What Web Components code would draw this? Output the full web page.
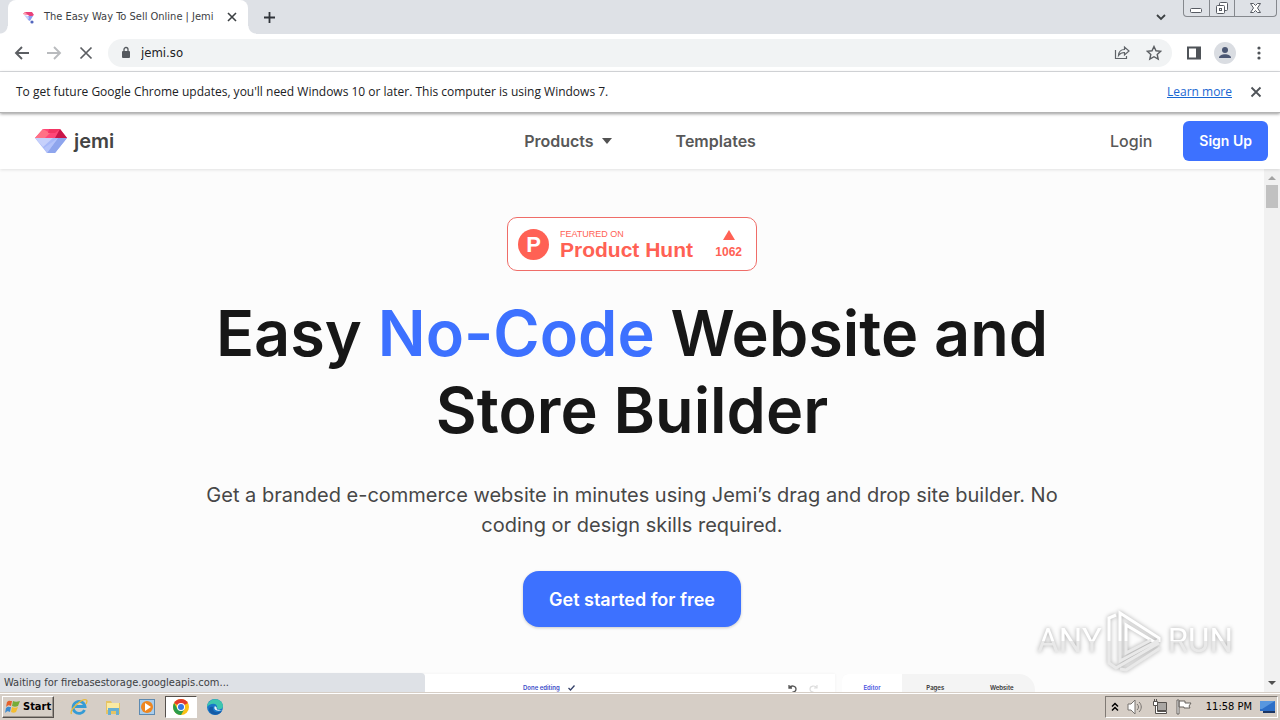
<!DOCTYPE html>
<html lang="en">
<head>
<meta charset="utf-8">
<title>The Easy Way To Sell Online | Jemi</title>
<style>
  html, body { height: 100%; margin: 0; }
  body {
    overflow: hidden;
    --ui: "DejaVu Sans Condensed", "DejaVu Sans", sans-serif;
    --brand: "Inter", "Liberation Sans", sans-serif;
    --blue: #3d71ff;
    font-family: var(--brand);
  }
</style>
</head>
<body>
<desktop-screen></desktop-screen>

<script>
const define = (name, html) => {
  const template = document.createElement('template');
  template.innerHTML = `<style>*{box-sizing:border-box}button,input{font:inherit;color:inherit;background:none;border:0;padding:0;margin:0}a{color:inherit;text-decoration:none}svg{display:block;flex:none}</style>` + html;
  customElements.define(name, class extends HTMLElement {
    constructor() {
      super();
      this.attachShadow({ mode: 'open' }).append(template.content.cloneNode(true));
    }
  });
};

/* ---------- Browser chrome ---------- */

define('tab-strip', `
<style>
  :host { display: flex; height: 34px; flex: none; background: #dee1e6; color: #3c4043; font: 11px/34px var(--ui); padding-left: 8px; }
  .tab { position: relative; display: flex; align-items: center; width: 240px; padding: 0 10px 0 14px; background: #fff; border-radius: 8px 8px 0 0; gap: 8px; }
  .tab::before, .tab::after { content: ""; position: absolute; bottom: 0; width: 8px; height: 8px; }
  .tab::before { left: -8px; background: radial-gradient(circle at 0 0, transparent 7px, #fff 8px); }
  .tab::after { right: -8px; background: radial-gradient(circle at 100% 0, transparent 7px, #fff 8px); }
  .title { flex: 1; white-space: nowrap; }
  .new { padding: 0 15px; }
  .fill { flex: 1; }
  .search { padding-right: 16px; }
  .window { display: flex; align-self: flex-start; height: 17px; margin-right: 3px; border: 1px solid #85888d; border-top: 0; border-radius: 0 0 4px 4px; }
  .window button { display: flex; justify-content: center; align-items: center; width: 25px; }
  .window button + button { border-left: 1px solid #85888d; }
  .window button:last-child { width: 42px; }
</style>
<div class="tab">
  <svg width="14" height="14" viewBox="0 0 14 14"><path d="M1 4l2-2h7l2 3-3 2-3-2z" fill="#e8417a"/><path d="M1 4l2-2 3 3z" fill="#ff9aaa"/><path d="M2 5l4 1 2 3-2 1z" fill="#c6cdfa"/><path d="M6 6h5l-3 5-2-1 1-2z" fill="#8b9cf0"/><circle cx="10" cy="12" r="1.600" fill="#5266be"/></svg>
  <span class="title">The Easy Way To Sell Online | Jemi</span>
  <button aria-label="Close tab"><svg width="12" height="12" viewBox="0 0 12 12"><path d="M2 2l8 8M10 2l-8 8" stroke="#3c4043" stroke-width="1.600"/></svg></button>
</div>
<button class="new" aria-label="New tab"><svg width="13" height="13" viewBox="0 0 13 13"><path d="M6.500 1v11M1 6.500h11" stroke="#30343a" stroke-width="1.800"/></svg></button>
<span class="fill"></span>
<button class="search" aria-label="Search tabs"><svg width="12" height="8" viewBox="0 0 12 8"><path d="M2 2l4 4 4-4" fill="none" stroke="#3c4043" stroke-width="1.800"/></svg></button>
<div class="window">
  <button aria-label="Minimize"><svg width="13" height="16" viewBox="0 0 13 16"><rect x=".5" y="8.500" width="11" height="4" rx="1" fill="#fff" stroke="#575b63"/></svg></button>
  <button aria-label="Restore"><svg width="14" height="16" viewBox="0 0 14 16" fill="#fff" stroke="#575b63"><rect x="4.500" y="2.500" width="8" height="8" rx="1"/><rect x="1.500" y="5.500" width="8" height="8" rx="1"/><rect x="4.500" y="8.500" width="2" height="2"/></svg></button>
  <button aria-label="Close"><svg width="13" height="16" viewBox="0 0 13 16"><path d="M1.500 3.500h3l2 2 2-2h3L8.500 8l3 4.500h-3l-2-2-2 2h-3L4.500 8z" fill="#fff" stroke="#575b63"/></svg></button>
</div>`);

define('browser-toolbar', `
<style>
  :host { display: flex; align-items: center; height: 38px; flex: none; padding: 0 17px 0 14px; border-bottom: 1px solid #dadce0; background: #fff; color: #202124; font: 13px/28px var(--ui); }
  .nav { display: flex; gap: 16px; margin-right: 14px; }
  .box { display: flex; align-items: center; flex: 1; height: 28px; padding: 0 10px 0 12px; border-radius: 14px; background: #f1f3f4; }
  input { flex: 1; min-width: 0; height: 28px; padding-left: 9px; outline: 0; }
  .box button + button { margin-left: 16px; }
  .side { display: flex; align-items: center; gap: 12px; margin-left: 14px; }
  .side button:last-child { margin-left: 7px; }
</style>
<div class="nav">
  <button aria-label="Back"><svg width="16" height="16" viewBox="0 0 16 16"><path d="M15 8H2M8 2L2 8l6 6" fill="none" stroke="#5b5e62" stroke-width="1.900"/></svg></button>
  <button aria-label="Forward"><svg width="16" height="16" viewBox="0 0 16 16"><path d="M1 8h13M8 2l6 6-6 6" fill="none" stroke="#b9bbbe" stroke-width="1.900"/></svg></button>
  <button aria-label="Stop loading"><svg width="16" height="16" viewBox="0 0 16 16"><path d="M2.500 2.500l11 11M13.500 2.500l-11 11" stroke="#5b5e62" stroke-width="1.700"/></svg></button>
</div>
<div class="box">
  <svg width="12" height="14" viewBox="0 0 12 14"><rect x="2" y="5" width="8" height="7" rx="1" fill="#55595e"/><path d="M4 6V3.500a2 2 0 014 0V6" fill="none" stroke="#55595e" stroke-width="1.300"/></svg>
  <input aria-label="Address" value="jemi.so" spellcheck="false">
  <button aria-label="Share"><svg width="16" height="16" viewBox="0 0 16 16" fill="none" stroke="#5f6368" stroke-width="1.200"><path d="M1.500 5v8.500h11V11"/><path d="M4.500 10.500c.3-4 2-6 6-6V2l4.500 4-4.500 4V7.500c-3 0-4.500.8-6 3z"/></svg></button>
  <button aria-label="Bookmark"><svg width="16" height="16" viewBox="0 0 16 16"><path d="M8 1.500l2 4.300 4.700.5-3.500 3.100 1 4.700L8 11.700l-4.200 2.400 1-4.700L1.300 6.300 6 5.800z" fill="none" stroke="#5b5e62" stroke-width="1.400"/></svg></button>
</div>
<div class="side">
  <button aria-label="Side panel"><svg width="16" height="16" viewBox="0 0 16 16"><rect x="2" y="2.500" width="12" height="11" fill="none" stroke="#4f5358" stroke-width="2"/><path d="M10 2h4v12h-4z" fill="#4f5358"/></svg></button>
  <button aria-label="Profile"><svg width="22" height="22" viewBox="0 0 22 22"><circle cx="11" cy="11" r="11" fill="#dadde2"/><circle cx="11" cy="8" r="3" fill="#4b5773"/><path d="M5 16c0-5 12-5 12 0z" fill="#4b5773"/></svg></button>
  <button aria-label="Menu"><svg width="8" height="16" viewBox="0 0 8 16" fill="#4f5358"><circle cx="4" cy="3" r="1.600"/><circle cx="4" cy="8" r="1.600"/><circle cx="4" cy="13" r="1.600"/></svg></button>
</div>`);

define('info-bar', `
<style>
  :host { position: relative; z-index: 2; display: flex; align-items: center; height: 41px; flex: none; padding: 0 18px 0 16px; background: #fff; border-bottom: 1px solid #b4b4b4; box-shadow: 0 1px 3px #999; color: #202124; font: 12px/18px "Open Sans", sans-serif; }
  span { flex: 1; }
  a { color: #1967d2; text-decoration: underline; margin-right: 18px; }
</style>
<span>To get future Google Chrome updates, you'll need Windows 10 or later. This computer is using Windows 7.</span>
<a href="#learn">Learn more</a>
<button aria-label="Dismiss"><svg width="12" height="12" viewBox="0 0 12 12"><path d="M1.500 1.500l9 9M10.500 1.500l-9 9" stroke="#4f5358" stroke-width="1.800"/></svg></button>`);

define('scroll-bar', `
<style>
  :host { display: flex; flex-direction: column; align-items: center; width: 16px; flex: none; background: #f1f1f1; padding: 6px 2px; }
  .thumb { width: 12px; height: 23px; margin: 5px 0 auto; background: #c1c1c1; }
</style>
<svg width="8" height="5" viewBox="0 0 8 5"><path d="M0 5l4-4 4 4z" fill="#a3a3a3"/></svg>
<div class="thumb"></div>
<svg width="8" height="5" viewBox="0 0 8 5"><path d="M0 0h8L4 4z" fill="#505050"/></svg>`);

define('status-bubble', `
<style>
  :host { position: absolute; left: 0; bottom: 0; z-index: 3; width: 425px; height: 19px; padding-left: 4px; background: #dee1e6; border-radius: 0 4px 0 0; color: #3c4043; font: 11px/20px var(--ui); }
</style><slot></slot>`);

/* ---------- Site ---------- */

define('site-nav', `
<style>
  :host { position: relative; z-index: 1; display: grid; grid-template-columns: 1fr auto 1fr; align-items: center; height: 56px; flex: none; padding: 0 14px 0 10px; background: #fff; box-shadow: 0 1px 3px #0000001c; color: #585858; font: 600 16px/24px var(--brand); padding: 0 12px; }
  .brand { display: flex; align-items: center; gap: 7px; padding-left: 23px; color: #444; font-size: 20px; }
  .links { display: flex; align-items: center; gap: 64px; }
  .links button { display: flex; align-items: center; gap: 8px; }
  .account { display: flex; align-items: center; justify-content: flex-end; gap: 31px; font-weight: 500; }
  .signup { padding: 8px 16px; border-radius: 6px; background: var(--blue); color: #fff; font-size: 14px; font-weight: 600; }
</style>
<a class="brand" href="#home">
  <svg width="32" height="26" viewBox="0 0 32 26"><path d="M8 1h17l7 9H0z" fill="#ff4778"/><path d="M8 1L0 10h10l5-5z" fill="#ff7186"/><path d="M25 1l7 9H20z" fill="#c91549"/><path d="M14 1h11l-5 4h-7z" fill="#f23563"/><path d="M0 10h32L20 25h-8z" fill="#a6b8f8"/><path d="M0 10h18L8 19z" fill="#c6d0fb"/><path d="M32 10L20 25h-8L23 10z" fill="#8ea5ed"/><path d="M23 10L12 25l-3-5z" fill="#b4c3fa"/></svg>
  <span>jemi</span>
</a>
<nav class="links">
  <button>Products <svg width="10" height="6" viewBox="0 0 10 6"><path d="M0 0h10L5 6z" fill="#525252"/></svg></button>
  <a href="#templates">Templates</a>
</nav>
<div class="account"><a href="#login">Login</a><a class="signup" href="#signup">Sign Up</a></div>`);

define('product-badge', `
<style>
  :host { display: block; font-family: "Liberation Sans", sans-serif; color: #ff6154; text-align: left; }
  a { display: flex; align-items: center; width: 250px; height: 54px; padding: 1px 14px 0 10px; border: 1px solid #ef6d68; border-radius: 10px; background: #fff; }
  .logo { width: 31px; height: 31px; border-radius: 50%; background: #ff6154; color: #fff; font: 700 22px/32px "Liberation Sans", sans-serif; text-align: center; }
  .name { display: grid; flex: 1; margin-left: 11px; font: 700 21px/22px "Liberation Sans", sans-serif; }
  small { font: 9px/10px "Liberation Sans", sans-serif; }
  .votes { display: grid; justify-items: center; gap: 4px; font: 700 12px/16px "Liberation Sans", sans-serif; }
</style>
<a href="#hunt">
  <span class="logo">P</span>
  <span class="name"><small>FEATURED ON</small>Product Hunt</span>
  <span class="votes"><svg width="12" height="10" viewBox="0 0 12 10"><path d="M6 0l6 10H0z" fill="#ff6154"/></svg>1062</span>
</a>`);

define('hero-section', `
<style>
  :host { display: flex; flex-direction: column; align-items: center; padding: 48px 24px 0; color: #171717; text-align: center; }
  h1 { max-width: 900px; margin: 24px 0 31px; font: 600 63px/77px var(--brand); }
  em { font-style: normal; color: var(--blue); }
  p { max-width: 860px; margin: 0 0 31px; color: #474747; font: 400 20px/30px var(--brand); }
  .cta { padding: 15px 26px 13px; border-radius: 16px; background: var(--blue); box-shadow: 0 1px 3px #0003; color: #fff; font: 600 18px/28px var(--brand); }
</style>
<product-badge></product-badge>
<h1><span>Easy</span> <em>No-Code</em> <span>Website and</span> <span>Store Builder</span></h1>
<p>Get a branded e-commerce website in minutes using Jemi’s drag and drop site builder. No coding or design skills required.</p>
<a class="cta" href="#start">Get started for free</a>
<slot></slot>`);

define('editor-preview', `
<style>
  :host { display: flex; gap: 7px; width: 100%; max-width: 806px; height: 60px; margin-top: 47px; color: #333; font: 600 6px/28px var(--brand); }
  .bar { display: flex; flex: 1; align-items: flex-start; padding: 0 17px 0 294px; background: #fff; box-shadow: 0 0 3px #0000000d; }
  .bar button { display: flex; align-items: center; height: 28px; }
  .done { gap: 8px; color: #3b4cc8; margin-right: auto; }
  .undo { margin-right: 12px; }
  .tabs { display: flex; width: 193px; background: #f4f4f4; border-radius: 6px 16px 0 0; overflow: hidden; align-items: flex-start; }
  .tabs button { flex: 1; height: 60px; display: flex; justify-content: center; line-height: 27px; }
  .tabs button:first-child { flex: none; width: 60px; background: #fff; color: #4a55e0; }
</style>
<div class="bar">
  <button class="done">Done editing <svg width="7" height="6" viewBox="0 0 7 6"><path d="M.5 3l2 2 4-4.500" fill="none" stroke="#354169" stroke-width="1.300"/></svg></button>
  <button class="undo" aria-label="Undo"><svg width="9" height="9" viewBox="0 0 9 9"><path d="M1 1v3h3M1.300 3.800C3 1 8 1.500 8 5c0 2-1.500 3-3.500 3" fill="none" stroke="#555" stroke-width="1.300"/></svg></button>
  <button aria-label="Redo"><svg width="9" height="9" viewBox="0 0 9 9"><path d="M8 1v3H5M7.700 3.800C6 1 1 1.500 1 5c0 2 1.500 3 3.500 3" fill="none" stroke="#ddd" stroke-width="1.200"/></svg></button>
</div>
<div class="tabs"><button>Editor</button><button>Pages</button><button>Website</button></div>`);

define('any-run-mark', `
<style>
  :host { position: absolute; right: 47px; bottom: 20px; z-index: 2; display: flex; align-items: center; gap: 4px; filter: drop-shadow(0 0 2px #0005); font: 400 33px/62px "Roboto", sans-serif; pointer-events: none; }
  span { background: linear-gradient(#fff 50%, #e9e9e9 50%); background-clip: text; -webkit-background-clip: text; color: transparent; }
</style>
<span>ANY</span>
<svg width="58" height="62" viewBox="0 0 58 62" fill="none" stroke-width="3">
  <g stroke="#fff"><path d="M3 31V8l7-3M14 31V3l39 25v4M20 31V15l30 18"/></g>
  <g stroke="#e9e9e9"><path d="M3 31v22l7 5 43-25M14 31v20l39-21M20 31v12l25-13M14 59l6 1 34-22"/></g>
</svg>
<span>RUN</span>`);

/* ---------- Desktop ---------- */

define('task-bar', `
<style>
  :host { display: flex; align-items: center; height: 28px; flex: none; padding: 1px 2px 0; border-top: 1px solid #d6cec6; background: #d6cec6; box-shadow: inset 0 1px #fff; color: #000; font: 11px/20px var(--ui); }
  .start { display: flex; align-items: center; gap: 2px; width: 52px; height: 22px; padding: 0 2px; border: 1px solid; border-color: #fff #55504c #55504c #fff; box-shadow: inset -1px -1px #9c958e; font-weight: 700; }
  .apps { display: flex; flex: 1; gap: 2px; padding-left: 9px; }
  .apps button { display: grid; place-items: center; width: 32px; height: 22px; }
  .apps .active { border: 1px solid; border-color: #55504c #fff #fff #55504c; background: #fff; }
  .tray { display: flex; align-items: center; height: 22px; padding: 0 2px 0 5px; border: 1px solid; border-color: #807a74 #fff #fff #807a74; gap: 8px; }
  .tray time { margin: 0 0 0 6px; }
</style>
<button class="start"><svg width="16" height="16" viewBox="0 0 16 16"><path d="M2 3c2-2 3-1 5-1L6 7C4 6 3 6 1 8z" fill="#e5602a"/><path d="M8 2c2 1 4 1 7 0l-2 5c-2 1-4 1-6 0z" fill="#76ac38"/><path d="M1 9c2-2 3-1 5-1l-1 5c-2-1-3-1-5 1z" fill="#3c8bd0"/><path d="M7 8c2 1 4 1 6 0l-2 5c-2 1-3 1-5 0z" fill="#f4bd30"/></svg>Start</button>
<div class="apps">
  <button aria-label="Internet Explorer"><svg width="18" height="18" viewBox="0 0 18 18" fill="none"><path d="M14.500 12A6 6 0 1115 8.500H5" stroke="#359bd5" stroke-width="2.800"/><path d="M1.500 16C-1 12 12 0 16.500 2c1 .7.500 2-.5 4" stroke="#e8ba3a" stroke-width="1.300"/></svg></button>
  <button aria-label="Explorer"><svg width="18" height="18" viewBox="0 0 18 18"><path d="M2 3h5l1 2h8v11H2z" fill="#e6c464"/><path d="M3 5h12v7H3z" fill="#fbeaa2"/><path d="M4 10h11v7h-3v-4H7v4H4z" fill="#68afd2"/></svg></button>
  <button aria-label="Media Player"><svg width="16" height="16" viewBox="0 0 16 16"><rect x=".5" y=".5" width="15" height="15" fill="#a9cdec" stroke="#5d8ab1"/><circle cx="8" cy="8" r="6" fill="#ee8620"/><path d="M6 4l6 4-6 4z" fill="#fff"/></svg></button>
  <button class="active" aria-label="Chrome"><svg width="16" height="16" viewBox="0 0 16 16"><circle cx="8" cy="8" r="8" fill="#fbc116"/><path d="M8 8L1.100 4A8 8 0 0114.900 4z" fill="#e33b2e"/><path d="M1.100 4A8 8 0 008 16l3.500-6L8 8 4.500 10z" fill="#2b9c4b"/><circle cx="8" cy="8" r="4" fill="#fff"/><circle cx="8" cy="8" r="3" fill="#3477e4"/></svg></button>
  <button aria-label="Edge"><svg width="16" height="16" viewBox="0 0 16 16"><circle cx="8" cy="8" r="8" fill="#1977c8"/><path d="M0 8C1-2 15-2 16 7c0 4-5 4-6 2 1-5-6-6-10-1z" fill="#3ec6ae"/><path d="M6 8c-1 6 5 6 9 4-3 5-12 5-13-1 0-3 2-4 4-3z" fill="#145aa6"/><path d="M8 7c-2 3 1 6 7 4-5 0-6-1-5-2z" fill="#eaf5fa"/></svg></button>
</div>
<div class="tray">
  <svg width="8" height="10" viewBox="0 0 8 10"><path d="M1 4.500l3-3 3 3M1 8.500l3-3 3 3" fill="none" stroke="#000" stroke-width="1.500"/></svg>
  <svg width="17" height="16" viewBox="0 0 17 16" stroke="#77736f"><path d="M1 5h3l4-4v14l-4-4H1z" fill="#fff"/><path d="M10 5c2 2 2 4 0 6M12 3c3 3 3 7 0 10" fill="none"/></svg>
  <svg width="16" height="16" viewBox="0 0 16 16" stroke="#55514e"><path d="M5.500 3.500h9v8h-9z" fill="#a9a6a3"/><path d="M1.500 2.500h4v4h-4zM3.500 6.500v8h11v-2h-9v-6" fill="#fff"/><path d="M2.500 0v2M4.500 0v2"/></svg>
  <svg width="16" height="16" viewBox="0 0 16 16" stroke="#66625e"><path d="M1 1h2v14H1zM3 2h6v2h6l-2 3 1 2H8V8H3z" fill="#fff"/></svg>
  <time>11:58 PM</time>
  <svg width="15" height="12" viewBox="0 0 15 12"><path d="M0 0h15v10H0z" fill="#2d6fc8"/><path d="M0 0h15L2 8H0z" fill="#5897df"/><path d="M3 10h12v2H3z" fill="#1b3564"/></svg>
</div>`);

define('desktop-screen', `
<style>
  :host { display: flex; flex-direction: column; height: 100vh; background: #fcfcfc; }
  main { position: relative; display: flex; flex: 1; min-height: 0; }
  .page { flex: 1; min-width: 0; overflow: hidden; }
</style>
<tab-strip></tab-strip>
<browser-toolbar></browser-toolbar>
<info-bar></info-bar>
<site-nav></site-nav>
<main>
  <div class="page"><hero-section><editor-preview></editor-preview></hero-section></div>
  <scroll-bar></scroll-bar>
  <status-bubble>Waiting for firebasestorage.googleapis.com...</status-bubble>
  <any-run-mark></any-run-mark>
</main>
<task-bar></task-bar>`);
</script>
</body>
</html>
